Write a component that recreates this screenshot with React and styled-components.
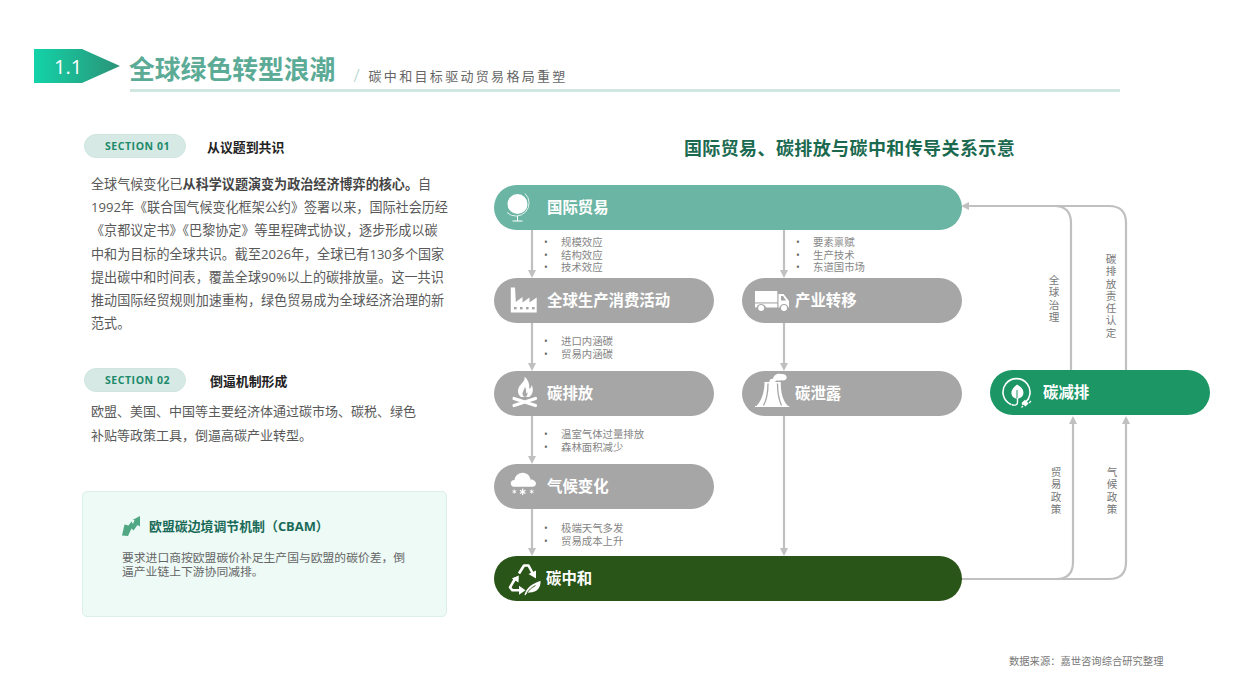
import React from 'react';
import styled, { createGlobalStyle } from 'styled-components';

const GlobalStyle = createGlobalStyle`
  html, body {
    margin: 0;
    padding: 0;
    background: #fff;
  }
  body {
    font-family: 'Open Sans', 'Noto Sans CJK SC', sans-serif;
  }
`;

const Page = styled.div`
  width: 1240px;
  height: 697px;
  overflow: hidden;
  display: flex;
  flex-direction: column;
`;

const Header = styled.header`
  display: flex;
  align-items: flex-start;
  padding: 49px 0 0 34px;
`;

const Badge = styled.div`
  width: 86px;
  height: 34px;
  padding-left: 20px;
  box-sizing: border-box;
  display: flex;
  align-items: center;
  color: #fff;
  font-size: 20px;
  font-family: 'Open Sans', sans-serif;
  font-weight: 400;
  background: linear-gradient(to right, #13d3a8 0%, #2a9377 100%);
  clip-path: polygon(0 0, 48px 0, 86px 50%, 48px 100%, 0 100%);
`;

const TitleBlock = styled.div`
  width: 990px;
  height: 43px;
  margin-left: 10px;
  box-sizing: border-box;
  border-bottom: 3px solid #d0e6e1;
  display: flex;
  align-items: flex-end;
`;

const Title = styled.h1`
  margin: 0 0 1px -1px;
  font-size: 25.8px;
  line-height: 38px;
  font-weight: 700;
  color: #5cab96;
`;

const Slash = styled.span`
  margin: 0 9px 4px 18px;
  font-size: 18px;
  line-height: 20px;
  font-weight: 300;
  color: #a9cfc5;
`;

const Subtitle = styled.span`
  margin-bottom: 3px;
  font-size: 13px;
  line-height: 20px;
  letter-spacing: 2.32px;
  color: #666;
`;

const Main = styled.main`
  display: flex;
  align-items: flex-start;
  padding-left: 82px;
`;

const LeftColumn = styled.section`
  width: 365px;
  padding-top: 42px;
`;

const SectionRow = styled.div`
  display: flex;
  align-items: center;
  height: 24px;
  margin-left: 2px;
`;

const Pill = styled.span`
  width: 102px;
  height: 24px;
  padding-left: 5px;
  border-radius: 12px;
  box-sizing: border-box;
  border: 1px solid #cfe6e0;
  background: #d6e9e5;
  color: #1c8a6a;
  font-size: 10.5px;
  font-weight: 700;
  letter-spacing: 0.55px;
  display: flex;
  align-items: center;
  justify-content: center;
`;

const SectionTitle = styled.span`
  margin-left: ${({ $gap }) => $gap}px;
  font-size: 12.9px;
  font-weight: 700;
  color: #222;
`;

const Paragraph = styled.p`
  margin: ${({ $top }) => $top}px 0 ${({ $bottom }) => $bottom}px 9px;
  font-size: ${({ $size }) => $size}px;
  line-height: 23.2px;
  color: #595959;
  white-space: nowrap;

  strong {
    font-weight: 700;
    color: #444;
  }
`;

const Card = styled.aside`
  height: 126px;
  box-sizing: border-box;
  padding: 24px 0 0 39px;
  background: #edfaf6;
  border: 1px solid #dcefe9;
  border-radius: 5px;
`;

const CardHead = styled.div`
  display: flex;
  align-items: center;
  gap: 9px;
  height: 20px;
`;

const CardTitle = styled.span`
  font-size: 12.9px;
  font-weight: 700;
  color: #1a6a58;
`;

const CardText = styled.p`
  margin: 14px 0 0;
  font-size: 11.8px;
  line-height: 14px;
  color: #666;
  white-space: nowrap;
`;

const RightColumn = styled.section`
  width: 711px;
  margin-left: 47px;
`;

const DiagramTitle = styled.h2`
  margin: 0;
  height: 93px;
  box-sizing: border-box;
  padding-top: 43px;
  text-align: center;
  font-size: 18px;
  line-height: 26px;
  letter-spacing: 0.4px;
  font-weight: 700;
  color: #1b6a50;
`;

const Canvas = styled.div`
  position: relative;
  width: 716px;
  height: 416px;
`;

const Wires = styled.svg`
  position: absolute;
  left: 0;
  top: 0;
`;

const Node = styled.div`
  position: absolute;
  left: ${({ $x }) => $x}px;
  top: ${({ $y }) => $y}px;
  width: ${({ $w }) => $w}px;
  height: 45px;
  box-sizing: border-box;
  padding-bottom: 2px;
  border-radius: 23px;
  background: ${({ $bg }) => $bg};
  color: #fff;
  font-size: 15.4px;
  font-weight: 700;
  display: flex;
  align-items: center;

  svg {
    flex: none;
    align-self: flex-start;
  }
`;

const BulletList = styled.ul`
  position: absolute;
  left: ${({ $x }) => $x}px;
  top: ${({ $y }) => $y}px;
  margin: 0;
  padding: 0;
  list-style: none;
  font-size: 10.4px;
  line-height: 12.5px;
  color: #868686;

  li {
    display: flex;
    white-space: nowrap;
  }

  li::before {
    content: '•';
    width: 17px;
    font-size: 10px;
    color: #666;
  }
`;

const SideLabel = styled.div`
  position: absolute;
  left: ${({ $x }) => $x}px;
  top: ${({ $y }) => $y}px;
  width: 12px;
  font-size: 10.6px;
  line-height: 12.3px;
  text-align: center;
  color: #777;
`;

const Source = styled.footer`
  position: absolute;
  left: 1009px;
  top: 654px;
  font-size: 10.3px;
  line-height: 14px;
  color: #777;
`;

const GRAY = '#a6a6a6';
const LINE = '#c0c0c0';

const Arrow = ({ x, y }) => <polygon points={`${x - 4},${y - 8} ${x + 4},${y - 8} ${x},${y}`} fill={LINE} />;

const Connectors = () => (
  <Wires width="716" height="416" viewBox="0 0 716 416" fill="none" stroke={LINE} strokeWidth="2.2">
    <path d="M38 45V86M38 138V179M38 231V272M38 324V364" />
    <path d="M290 45V86M290 138V179M290 231V364" />
    <path d="M632 185V38Q632 21 615 21H474M577 185V38Q577 21 560 21" />
    <path d="M467 394H615Q632 394 632 377V238M562 394Q579 394 579 377V238" />
    <g stroke="none">
      <Arrow x={38} y={93} />
      <Arrow x={38} y={186} />
      <Arrow x={38} y={279} />
      <Arrow x={38} y={371} />
      <Arrow x={290} y={93} />
      <Arrow x={290} y={186} />
      <Arrow x={290} y={371} />
      <polygon points="467,21 475,17 475,25" fill={LINE} />
      <polygon points="579,231 575,239 583,239" fill={LINE} />
      <polygon points="632,231 628,239 636,239" fill={LINE} />
    </g>
  </Wires>
);

const Slot = ({ children, w = 53 }) => (
  <svg width={w} height="45" viewBox={`0 0 ${w} 45`} fill="#fff">
    {children}
  </svg>
);

const GlobeIcon = () => (
  <Slot>
    <circle cx="23.5" cy="19" r="10" />
    <path d="M31 8.5A12.6 12.6 0 0 1 13 27.5" fill="none" stroke="#fff" strokeWidth="0.8" />
    <path d="M23.5 31V36M18.5 36H28.5" fill="none" stroke="#fff" strokeWidth="1" />
  </Slot>
);

const FactoryIcon = () => (
  <Slot>
    <path d="M16.8 9.5H21L21.8 24L28.5 19V24.5L35.5 19.5V24.5L42.7 19.5V34.5H16.8Z" />
    <g fill={GRAY}>
      <rect x="20" y="29" width="2.6" height="2.4" />
      <rect x="26" y="29" width="2.6" height="2.4" />
      <rect x="32" y="29" width="2.6" height="2.4" />
      <rect x="38" y="29" width="2.6" height="2.4" />
    </g>
  </Slot>
);

const FireIcon = () => (
  <Slot>
    <path d="M30.5 5.8C31.5 10 27 12.5 25 16C23 20 24 23.5 27 26L35 26C38.5 24 40 19.5 37.8 14C37.3 16.2 36.5 17.2 35.2 17.8C35.8 13 34 8.5 30.5 5.8Z" />
    <path d="M30.8 15.5C31 18.5 28 20.5 28.6 23.5C29 25 30 26 31 26C33 25.6 34 23.5 33.2 21C32.8 22 32.5 22.3 32 22.3C32.4 19.8 32 17.5 30.8 15.5Z" fill={GRAY} />
    <path d="M20 27.5L41.5 34.5M20 34.5L41.5 27.5" fill="none" stroke="#fff" strokeWidth="3.2" strokeLinecap="round" />
  </Slot>
);

const SnowIcon = () => (
  <Slot>
    <path d="M20.5 22.8C17.5 22.8 16.6 20.4 16.8 19C17 17 18.8 15.8 20.5 16C21 11.5 25 8.6 29 8.8C33 9 36 12 36.5 15.5C39.5 15.5 42 17.5 42 19.5C42 21.5 40.5 22.8 38 22.8Z" />
    <path d="M20.3 25.6V29.6M18.5 26.6L22.1 28.6M22.1 26.6L18.5 28.6M37.7 25.6V29.6M35.9 26.6L39.5 28.6M39.5 26.6L35.9 28.6" stroke="#fff" strokeWidth="0.9" />
    <path d="M28.7 24.6V31M25.9 26.2L31.5 29.4M31.5 26.2L25.9 29.4" stroke="#fff" strokeWidth="1.2" />
  </Slot>
);

const TruckIcon = () => (
  <Slot>
    <rect x="13" y="13" width="22.3" height="11.4" />
    <path d="M13 25.4H35.3V29.6H24C23.5 27.5 21.5 26 19.2 26C17 26 15 27.5 14.5 29.6H13Z" />
    <path d="M36.5 16H41.5L47 23V29.6H46.5C46 27.5 44.3 26 42 26C39.8 26 38 27.5 37.5 29.6H36.5Z" />
    <circle cx="19.2" cy="30" r="3" />
    <circle cx="42" cy="30" r="3" />
    <path d="M39 18H41L44 22.5H39Z" fill={GRAY} />
  </Slot>
);

const TowerIcon = () => (
  <Slot>
    <path d="M22.5 11H38.8C38.6 20 40 29 46 35H47.3V36H13V35H14.5C20 29 22.6 20 22.5 11Z" />
    <g fill="none" stroke={GRAY} strokeWidth="1.3">
      <path d="M26 12.5C26 22 24.5 29 21.5 34.5" />
      <path d="M35.5 12.5C35.5 22 37 29 39.5 34.5" />
    </g>
    <path d="M27.5 11C27 8.5 29.5 7.5 31 7.8C31.5 4.5 35 2 38.5 3C41 2.5 44.7 3.5 44.7 6.5C44.7 9 42 9.8 39.5 9.3C37 10 35.8 9.5 34.5 9.5C33.5 11 31 12 27.5 11Z" />
  </Slot>
);

const RecycleIcon = () => (
  <Slot w={52}>
    <g fill="none" stroke="#fff" strokeWidth="2.6" strokeLinejoin="round">
      <path d="M25 17.5L30 9.5H34.5L38.5 17" />
      <path d="M21.5 22L16 31.3L18.3 34.3H26" />
    </g>
    <polygon points="34.5,18 42,14.5 42,22.5" />
    <polygon points="25,29.8 25,38.8 31.5,34.3" />
    <polygon points="17.8,22.5 24.8,19.5 24.5,26.5" />
    <path d="M30.5 39C31.5 35 34 29 46.5 24.7C47 31 43.5 36.5 35.5 36.5C33.5 36.5 32.5 37.5 31.5 39.3Z" />
    <path d="M33 37C35 34 37.5 31.5 41.5 29.5" fill="none" stroke="#2a5518" strokeWidth="0.9" />
  </Slot>
);

const PlugLeafIcon = () => (
  <Slot>
    <path d="M32 34.5A13.5 13.5 0 1 0 21 34.5" fill="none" stroke="#fff" strokeWidth="1.6" />
    <path d="M27 14.5C32 17 34.5 20.5 33 25C32 27.5 29.5 28.8 27.5 28.5C24.5 28.8 22 27 21.5 24C21 20 24 17 27 14.5Z" />
    <path d="M27 20V28" fill="none" stroke="#1c9665" strokeWidth="1" />
    <path d="M27.5 28V32.5C27.5 34.8 25 35.8 21.5 34.5" fill="none" stroke="#fff" strokeWidth="1.4" />
    <path d="M31.5 33L35 29.8L38.5 33.5L35.5 36.5Z" />
    <path d="M37 30.5L39 28.5M39 33L41 31M33 36L31.5 37.5" stroke="#fff" strokeWidth="1.2" />
  </Slot>
);

const TrendIcon = () => (
  <svg width="18" height="20" viewBox="0 0 18 20" style={{ flex: 'none' }}>
    <path d="M0 19.5L2.5 8.5L6.5 9.5L9.5 5.5L11 8L12.5 4L10.5 4L18 0L18 10.5L15.5 9L11.5 14.5L9.5 12.5L6 20Z" fill="#4fa883" />
  </svg>
);

const Labels = ({ x, y, text }) => (
  <SideLabel $x={x} $y={y}>
    {text.split('').map((ch) => (
      <div key={ch}>{ch}</div>
    ))}
  </SideLabel>
);

const Bullets = ({ x, y, items }) => (
  <BulletList $x={x} $y={y}>
    {items.map((item) => (
      <li key={item}>{item}</li>
    ))}
  </BulletList>
);

export default function App() {
  return (
    <Page>
      <GlobalStyle />
      <Header>
        <Badge>1.1</Badge>
        <TitleBlock>
          <Title>全球绿色转型浪潮</Title>
          <Slash>/</Slash>
          <Subtitle>碳中和目标驱动贸易格局重塑</Subtitle>
        </TitleBlock>
      </Header>

      <Main>
        <LeftColumn>
          <SectionRow>
            <Pill>SECTION 01</Pill>
            <SectionTitle $gap={21}>从议题到共识</SectionTitle>
          </SectionRow>
          <Paragraph $size={13.08} $top={15} $bottom={33}>
            全球气候变化已<strong>从科学议题演变为政治经济博弈的核心。</strong>自<br />
            1992年《联合国气候变化框架公约》签署以来，国际社会历经<br />
            《京都议定书》《巴黎协定》等里程碑式协议，逐步形成以碳<br />
            中和为目标的全球共识。截至2026年，全球已有130多个国家<br />
            提出碳中和时间表，覆盖全球90%以上的碳排放量。这一共识<br />
            推动国际经贸规则加速重构，绿色贸易成为全球经济治理的新<br />
            范式。
          </Paragraph>
          <SectionRow>
            <Pill>SECTION 02</Pill>
            <SectionTitle $gap={24}>倒逼机制形成</SectionTitle>
          </SectionRow>
          <Paragraph $size={13} $top={8} $bottom={44}>
            欧盟、美国、中国等主要经济体通过碳市场、碳税、绿色<br />
            补贴等政策工具，倒逼高碳产业转型。
          </Paragraph>
          <Card>
            <CardHead>
              <TrendIcon />
              <CardTitle>欧盟碳边境调节机制（CBAM）</CardTitle>
            </CardHead>
            <CardText>
              要求进口商按欧盟碳价补足生产国与欧盟的碳价差，倒<br />
              逼产业链上下游协同减排。
            </CardText>
          </Card>
        </LeftColumn>

        <RightColumn>
          <DiagramTitle>国际贸易、碳排放与碳中和传导关系示意</DiagramTitle>
          <Canvas>
            <Connectors />
            <Node $x={0} $y={0} $w={468} $bg="#6bb5a4"><GlobeIcon />国际贸易</Node>
            <Node $x={0} $y={93} $w={220} $bg={GRAY}><FactoryIcon />全球生产消费活动</Node>
            <Node $x={248} $y={93} $w={220} $bg={GRAY}><TruckIcon />产业转移</Node>
            <Node $x={0} $y={186} $w={220} $bg={GRAY}><FireIcon />碳排放</Node>
            <Node $x={248} $y={186} $w={220} $bg={GRAY}><TowerIcon />碳泄露</Node>
            <Node $x={0} $y={279} $w={220} $bg={GRAY}><SnowIcon />气候变化</Node>
            <Node $x={0} $y={371} $w={468} $bg="#2a5518"><RecycleIcon />碳中和</Node>
            <Node $x={496} $y={185} $w={220} $bg="#1c9665"><PlugLeafIcon />碳减排</Node>

            <Bullets x={50} y={51} items={['规模效应', '结构效应', '技术效应']} />
            <Bullets x={302} y={51} items={['要素禀赋', '生产技术', '东道国市场']} />
            <Bullets x={50} y={150} items={['进口内涵碳', '贸易内涵碳']} />
            <Bullets x={50} y={243} items={['温室气体过量排放', '森林面积减少']} />
            <Bullets x={50} y={337} items={['极端天气多发', '贸易成本上升']} />

            <Labels x={554} y={89} text="全球治理" />
            <Labels x={611} y={68} text="碳排放责任认定" />
            <Labels x={556} y={281} text="贸易政策" />
            <Labels x={612} y={281} text="气候政策" />
          </Canvas>
        </RightColumn>
      </Main>
      <Source>数据来源：嘉世咨询综合研究整理</Source>
    </Page>
  );
}
